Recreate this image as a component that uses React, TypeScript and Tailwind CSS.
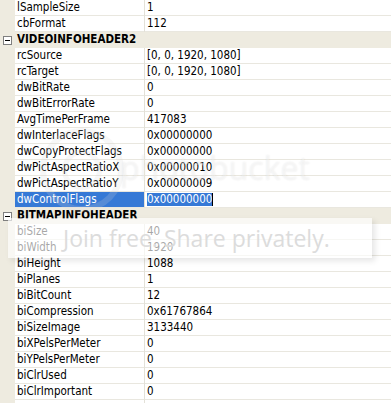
import React from 'react';

type Row =
  | { kind: 'cat'; label: string }
  | { kind: 'prop'; name: string; value: string; selected?: boolean };

const rows: Row[] = [
  { kind: 'prop', name: 'lSampleSize', value: '1' },
  { kind: 'prop', name: 'cbFormat', value: '112' },
  { kind: 'cat', label: 'VIDEOINFOHEADER2' },
  { kind: 'prop', name: 'rcSource', value: '[0, 0, 1920, 1080]' },
  { kind: 'prop', name: 'rcTarget', value: '[0, 0, 1920, 1080]' },
  { kind: 'prop', name: 'dwBitRate', value: '0' },
  { kind: 'prop', name: 'dwBitErrorRate', value: '0' },
  { kind: 'prop', name: 'AvgTimePerFrame', value: '417083' },
  { kind: 'prop', name: 'dwInterlaceFlags', value: '0x00000000' },
  { kind: 'prop', name: 'dwCopyProtectFlags', value: '0x00000000' },
  { kind: 'prop', name: 'dwPictAspectRatioX', value: '0x00000010' },
  { kind: 'prop', name: 'dwPictAspectRatioY', value: '0x00000009' },
  { kind: 'prop', name: 'dwControlFlags', value: '0x00000000', selected: true },
  { kind: 'cat', label: 'BITMAPINFOHEADER' },
  { kind: 'prop', name: 'biSize', value: '40' },
  { kind: 'prop', name: 'biWidth', value: '1920' },
  { kind: 'prop', name: 'biHeight', value: '1088' },
  { kind: 'prop', name: 'biPlanes', value: '1' },
  { kind: 'prop', name: 'biBitCount', value: '12' },
  { kind: 'prop', name: 'biCompression', value: '0x61767864' },
  { kind: 'prop', name: 'biSizeImage', value: '3133440' },
  { kind: 'prop', name: 'biXPelsPerMeter', value: '0' },
  { kind: 'prop', name: 'biYPelsPerMeter', value: '0' },
  { kind: 'prop', name: 'biClrUsed', value: '0' },
  { kind: 'prop', name: 'biClrImportant', value: '0' },
  { kind: 'prop', name: '', value: '' },
];

function MinusBox() {
  return (
    <svg width="9" height="9" viewBox="0 0 9 9" className="shrink-0">
      <rect x="0.5" y="0.5" width="8" height="8" fill="#ffffff" stroke="#7f7f7f" />
      <path d="M2 4.5h5" stroke="#000000" strokeWidth="1" />
    </svg>
  );
}

function CategoryRow({ label }: { label: string }) {
  return (
    <div className="flex h-[16px] items-center bg-[#eeebe0]">
      <div className="flex w-[15px] shrink-0 items-center pl-[3px]">
        <MinusBox />
      </div>
      <span className="pl-[2px] text-[11.5px] font-bold leading-none text-black">{label}</span>
    </div>
  );
}

function PropRow({ name, value, selected }: { name: string; value: string; selected?: boolean }) {
  return (
    <div className="flex h-[16px]">
      <div className="w-[15px] shrink-0 bg-[#eeebe0]" />
      <div
        className={
          selected
            ? 'flex w-[129px] shrink-0 items-center border-b border-[#e9e7df] bg-[#3679d6] pl-[2px] text-[11.5px] leading-none text-white'
            : 'flex w-[129px] shrink-0 items-center border-b border-[#e9e7df] bg-white pl-[2px] text-[11.5px] leading-none text-black'
        }
      >
        {name}
      </div>
      <div className="w-px shrink-0 bg-[#e3e1d8]" />
      <div className="flex flex-1 items-center border-b border-[#e9e7df] bg-white pl-[2px] text-[11.5px] leading-none text-black">
        {selected ? (
          <span className="flex items-center">
            <span className="bg-[#3679d6] py-[1px] text-white">{value}</span>
            <span className="h-[13px] w-px bg-black" />
          </span>
        ) : (
          value
        )}
      </div>
    </div>
  );
}

export default function App() {
  return (
    <div
      className="relative h-[403px] w-[391px] overflow-hidden bg-white"
      style={{ fontFamily: "'DejaVu Sans Condensed', 'Liberation Sans', sans-serif" }}
    >
      <div className="flex flex-col">
        {rows.map((r, i) =>
          r.kind === 'cat' ? (
            <CategoryRow key={i} label={r.label} />
          ) : (
            <PropRow key={i} name={r.name} value={r.value} selected={r.selected} />
          )
        )}
      </div>

      {/* photobucket watermark */}
      <div className="pointer-events-none absolute left-[40px] top-[128px] h-[84px] w-[84px] rounded-full border-[6px] border-[#d8d8d8]/20" />
      <div className="pointer-events-none absolute left-[62px] top-[150px] h-[40px] w-[40px] rounded-full border-[5px] border-[#d8d8d8]/20" />
      <div
        className="pointer-events-none absolute left-[120px] top-[152px] text-[32px] leading-none text-white/40"
        style={{ fontFamily: "'Open Sans', 'Liberation Sans', sans-serif", textShadow: '0 0 2px rgba(0,0,0,0.08)' }}
      >
        photobucket
      </div>
      <div className="pointer-events-none absolute left-[8px] top-[218px] flex h-[40px] w-[364px] items-center bg-white/65 pl-[55px] shadow-[3px_3px_6px_rgba(0,0,0,0.1)]">
        <span
          className="text-[23px] leading-none text-[#dcdcdc]"
          style={{ fontFamily: "'Open Sans', 'Liberation Sans', sans-serif" }}
        >
          Join free. Share privately.
        </span>
      </div>
    </div>
  );
}
